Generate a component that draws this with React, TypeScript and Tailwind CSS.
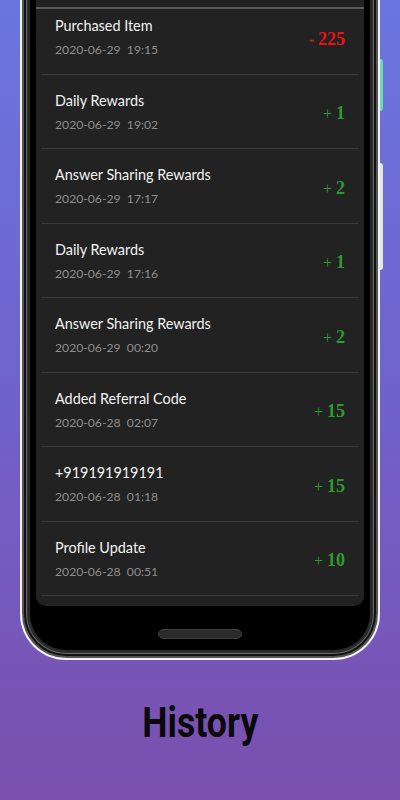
import React from "react"

type Entry = {
  title: string
  date: string
  sign: "+" | "-"
  amount: number
}

const entries: Entry[] = [
  { title: "Purchased Item", date: "2020-06-29  19:15", sign: "-", amount: 225 },
  { title: "Daily Rewards", date: "2020-06-29  19:02", sign: "+", amount: 1 },
  { title: "Answer Sharing Rewards", date: "2020-06-29  17:17", sign: "+", amount: 2 },
  { title: "Daily Rewards", date: "2020-06-29  17:16", sign: "+", amount: 1 },
  { title: "Answer Sharing Rewards", date: "2020-06-29  00:20", sign: "+", amount: 2 },
  { title: "Added Referral Code", date: "2020-06-28  02:07", sign: "+", amount: 15 },
  { title: "+919191919191", date: "2020-06-28  01:18", sign: "+", amount: 15 },
  { title: "Profile Update", date: "2020-06-28  00:51", sign: "+", amount: 10 },
]

function HistoryRow({ entry }: { entry: Entry }) {
  const isDebit = entry.sign === "-"
  return (
    <div className="mx-[5px] h-[74.5px] border-b border-[#393939] flex items-center justify-between pl-[14px] pr-[14px]">
      <div className="flex flex-col pt-[3px]">
        <span className="text-[14.4px] leading-5 text-[#f2f2f2] font-['Lato',sans-serif]">{entry.title}</span>
        <span className="mt-[4px] text-[12.2px] leading-5 text-[#8e8e8e] whitespace-pre font-['Lato',sans-serif]">
          {entry.date}
        </span>
      </div>
      <div
        className={`flex items-baseline pt-[5px] font-['Liberation_Serif',serif] ${
          isDebit ? "text-[#ee1111]" : "text-[#2e9a2e]"
        }`}
      >
        <span className={`text-[16px] ${isDebit ? "font-bold" : "font-normal"}`}>{entry.sign}</span>
        <span className="ml-[4px] text-[18px] font-bold">{entry.amount}</span>
      </div>
    </div>
  )
}

export default function App() {
  return (
    <div className="w-[400px] h-[800px] overflow-hidden bg-gradient-to-b from-[#6a75df] via-[#7062cc] to-[#7a4fad] flex flex-col items-center">
      {/* Phone frame */}
      <div className="relative w-[360px] h-[660px] shrink-0">
        <div className="absolute right-[-3px] top-[59px] w-[3px] h-[52px] bg-[#6fdcb8] rounded-r-sm" />
        <div className="absolute right-[-3px] top-[163px] w-[3px] h-[107px] bg-[#e6e6e6] rounded-r-sm" />

        <div className="h-full rounded-b-[46px] bg-[#f4f4f4] px-[2px] pb-[2px]">
          <div className="h-full rounded-b-[44px] bg-[#555] px-[2px] pb-[2px]">
            <div className="h-full rounded-b-[42px] bg-[#111] px-[2px] pb-[2px]">
              <div className="h-full rounded-b-[40px] bg-[#6b6b6b] px-[1px] pb-[1px]">
                <div className="h-full rounded-b-[39px] bg-[#2a2a2a] px-[3px] pb-[3px]">
                  <div className="h-full rounded-b-[36px] bg-black px-[6px] pb-[4px] flex flex-col items-center">
                    {/* Screen */}
                    <div className="relative w-full h-[606px] bg-[#222] rounded-b-[10px] overflow-hidden">
                      <div className="absolute left-0 right-0 top-0 h-[9px] bg-[#222] border-b-2 border-[#585858] z-10" />
                      {entries.map((e, i) => (
                        <HistoryRow key={i} entry={e} />
                      ))}
                    </div>
                    <div className="mt-[23px] w-[84px] h-[10px] rounded-full bg-[#2b2b2b] border border-[#3c3c3c]" />
                  </div>
                </div>
              </div>
            </div>
          </div>
        </div>
      </div>

      <h1 className="mt-[39px] text-[42px] leading-[48px] font-bold text-[#0a0a0a] font-['Roboto',sans-serif] scale-x-[0.85]">
        History
      </h1>
    </div>
  )
}
